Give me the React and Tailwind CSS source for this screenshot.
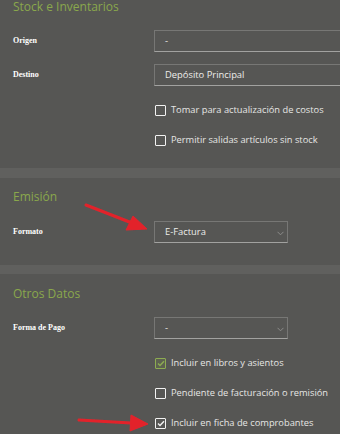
import React from "react";

const font = { fontFamily: "'Open Sans', 'Noto Sans', sans-serif" };

function Label({ children }) {
  return (
    <div className="w-[141px] shrink-0 text-[8px] font-bold text-white [font-family:'Liberation_Serif',serif]">
      {children}
    </div>
  );
}

function Input({ value, wide, chevron }) {
  return (
    <div
      className={`relative h-[22px] shrink-0 flex items-center pl-[10px] border border-[#777775] border-b-[#a2a2a0] text-[9.4px] text-[#ededeb] [font-family:'Open_Sans',sans-serif] ${wide ? "w-[220px]" : "w-[134px]"}`}
    >
      {value}
      {chevron && (
        <svg className="absolute right-[3px] top-[9px]" width="7" height="5" viewBox="0 0 7 5">
          <path d="M0.5 0.8 L3.5 3.8 L6.5 0.8" fill="none" stroke="#8c8c8a" strokeWidth="1" />
        </svg>
      )}
    </div>
  );
}

function Check({ label, checked, green, className = "" }) {
  return (
    <div className={`flex items-center h-[12px] pl-[142px] ${className}`}>
      <div
        className={`w-[11px] h-[11px] shrink-0 rounded-[1px] border-[1.5px] flex items-center justify-center ${green ? "border-[#8dac52] bg-[#5d6150]" : "border-[#f2f2f2]"}`}
      >
        {checked && (
          <svg width="8" height="7" viewBox="0 0 8 7">
            <path d="M1 3.6 L3 5.5 L7 1.2" fill="none" stroke={green ? "#8dac52" : "#f2f2f2"} strokeWidth="1.4" />
          </svg>
        )}
      </div>
      <span className="ml-[5px] text-[9.3px] text-[#e6e6e4] whitespace-nowrap [font-family:'Open_Sans',sans-serif]">
        {label}
      </span>
    </div>
  );
}

function Heading({ children, className = "" }) {
  return (
    <div className={`h-[14px] leading-[14px] text-[12px] text-[#8aa84c] whitespace-nowrap [font-family:'Open_Sans',sans-serif] ${className}`}>
      {children}
    </div>
  );
}

export default function App() {
  return (
    <div className="relative w-[340px] h-[434px] overflow-hidden bg-[#565654]" style={font}>
      {/* Section 1 */}
      <div className="pl-[13px] pb-[22px]">
        <Heading>Stock e Inventarios</Heading>
        <div className="flex items-center mt-[16px]">
          <Label>Origen</Label>
          <Input value="-" wide />
        </div>
        <div className="flex items-center mt-[12px]">
          <Label>Destino</Label>
          <Input value="Depósito Principal" wide />
        </div>
        <Check className="mt-[18px]" label="Tomar para actualización de costos" />
        <Check className="mt-[18px]" label="Permitir salidas artículos sin stock" />
      </div>
      <div className="h-[10px] bg-[#60605e]" />
      {/* Section 2 */}
      <div className="pl-[13px] pb-[22px]">
        <Heading className="mt-[12px]">Emisión</Heading>
        <div className="flex items-center mt-[17px]">
          <Label>Formato</Label>
          <Input value="E-Factura" chevron />
        </div>
      </div>
      <div className="h-[9px] bg-[#60605e]" />
      {/* Section 3 */}
      <div className="pl-[13px]">
        <Heading className="mt-[13px]">Otros Datos</Heading>
        <div className="flex items-center mt-[16px]">
          <Label>Forma de Pago</Label>
          <Input value="-" chevron />
        </div>
        <Check className="mt-[18px]" label="Incluir en libros y asientos" checked green />
        <Check className="mt-[18px]" label="Pendiente de facturación o remisión" />
        <Check className="mt-[18px]" label="Incluir en ficha de comprobantes" checked />
      </div>

      {/* Red annotation arrows */}
      <svg className="absolute left-0 top-0 pointer-events-none" width="340" height="434" viewBox="0 0 340 434">
        <defs>
          <filter id="soft" x="-20%" y="-20%" width="140%" height="140%">
            <feGaussianBlur stdDeviation="0.6" />
          </filter>
        </defs>
        <g filter="url(#soft)" fill="#e3232b" stroke="#e3232b">
          <line x1="86" y1="205" x2="132" y2="223" strokeWidth="3" strokeLinecap="round" />
          <polygon points="147,229 126,230 133,216" strokeWidth="1" strokeLinejoin="round" />
          <line x1="79" y1="420" x2="131" y2="423" strokeWidth="3" strokeLinecap="round" />
          <polygon points="148,424 130,431 131,415" strokeWidth="1" strokeLinejoin="round" />
        </g>
      </svg>
    </div>
  );
}
